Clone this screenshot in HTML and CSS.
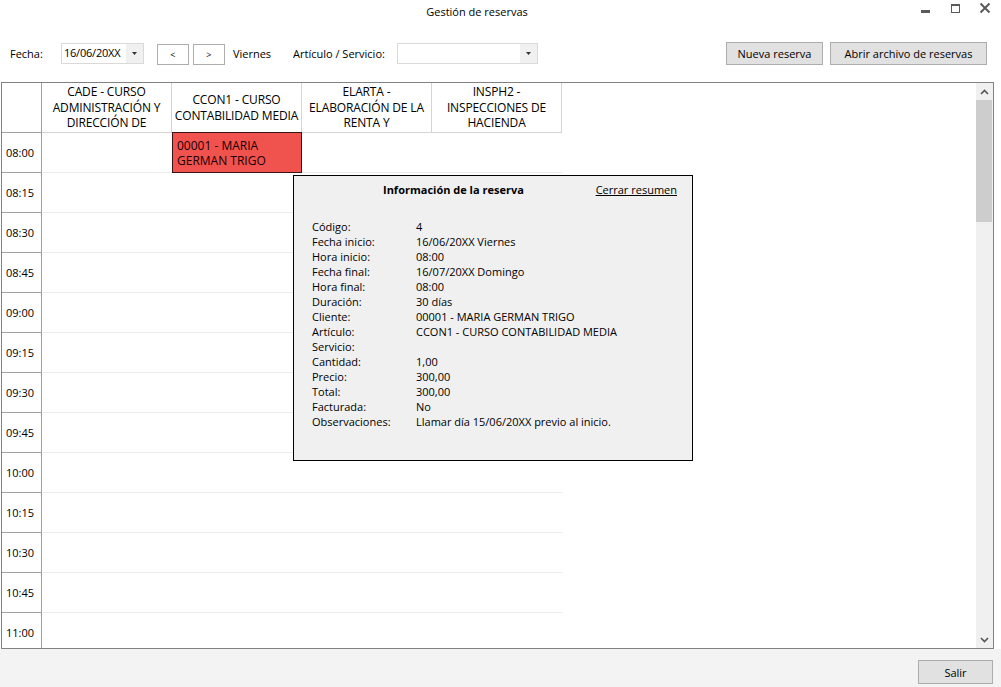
FILE: index.html
```html
<!DOCTYPE html>
<html lang="es">
<head>
<meta charset="utf-8">
<title>Gestión de reservas</title>
<link rel="stylesheet" href="styles.css">
</head>
<body>
<div class="window">
  <header class="titlebar">
    <span class="title">Gestión de reservas</span>
    <div class="controls">
      <svg class="ctl" width="30" height="20" viewBox="0 0 30 20"><rect x="10" y="10" width="9" height="3" fill="#5a5a5a"/></svg>
      <svg class="ctl" width="30" height="20" viewBox="0 0 30 20"><rect x="10.5" y="4.5" width="8" height="8" fill="none" stroke="#5a5a5a"/><rect x="10" y="4" width="9" height="2" fill="#5a5a5a"/></svg>
      <svg class="ctl" width="30" height="20" viewBox="0 0 30 20"><path d="M9.5 3.5 L18.5 12.5 M18.5 3.5 L9.5 12.5" stroke="#5a5a5a" stroke-width="2"/></svg>
    </div>
  </header>

  <div class="toolbar">
    <span class="lbl lbl-fecha">Fecha:</span>
    <div class="datebox">
      <span class="dateval">16/06/20XX</span>
      <span class="ddbtn"><svg width="5" height="3" viewBox="0 0 5 3"><path d="M0 0H5L2.5 3Z" fill="#333"/></svg></span>
    </div>
    <button class="navbtn">&lt;</button>
    <button class="navbtn">&gt;</button>
    <span class="lbl lbl-dia">Viernes</span>
    <span class="lbl lbl-art">Artículo / Servicio:</span>
    <div class="combo">
      <span class="ddbtn"><svg width="5" height="3" viewBox="0 0 5 3"><path d="M0 0H5L2.5 3Z" fill="#333"/></svg></span>
    </div>
    <div class="spacer"></div>
    <button class="btn btn-nueva">Nueva reserva</button>
    <button class="btn btn-abrir">Abrir archivo de reservas</button>
  </div>

  <div class="frame">
    <div class="sheet">
      <div class="hrow">
        <div class="tcell"></div>
        <div class="hcell">CADE - CURSO ADMINISTRACIÓN Y DIRECCIÓN DE</div>
        <div class="hcell">CCON1 - CURSO CONTABILIDAD MEDIA</div>
        <div class="hcell">ELARTA - ELABORACIÓN DE LA RENTA Y</div>
        <div class="hcell">INSPH2 - INSPECCIONES DE HACIENDA</div>
      </div>
      <div class="row">
        <div class="tcell">08:00</div>
        <div class="dcells"><div class="dcell"></div><div class="dcell booking">00001 - MARIA GERMAN TRIGO</div><div class="dcell"></div><div class="dcell"></div></div>
      </div>
      <div class="row"><div class="tcell">08:15</div><div class="dcells"></div></div>
      <div class="row"><div class="tcell">08:30</div><div class="dcells"></div></div>
      <div class="row"><div class="tcell">08:45</div><div class="dcells"></div></div>
      <div class="row"><div class="tcell">09:00</div><div class="dcells"></div></div>
      <div class="row"><div class="tcell">09:15</div><div class="dcells"></div></div>
      <div class="row"><div class="tcell">09:30</div><div class="dcells"></div></div>
      <div class="row"><div class="tcell">09:45</div><div class="dcells"></div></div>
      <div class="row"><div class="tcell">10:00</div><div class="dcells"></div></div>
      <div class="row"><div class="tcell">10:15</div><div class="dcells"></div></div>
      <div class="row"><div class="tcell">10:30</div><div class="dcells"></div></div>
      <div class="row"><div class="tcell">10:45</div><div class="dcells"></div></div>
      <div class="row"><div class="tcell">11:00</div><div class="dcells"></div></div>
    </div>
    <div class="scrollbar">
      <div class="sarrow"><svg width="9" height="6" viewBox="0 0 9 6"><path d="M1 5 L4.5 1.5 L8 5" fill="none" stroke="#555" stroke-width="1.6"/></svg></div>
      <div class="thumb"></div>
      <div class="track"></div>
      <div class="sarrow"><svg width="9" height="6" viewBox="0 0 9 6"><path d="M1 1 L4.5 4.5 L8 1" fill="none" stroke="#555" stroke-width="1.6"/></svg></div>
    </div>

    <div class="popup">
      <div class="popup-head">
        <span class="popup-title">Información de la reserva</span>
        <span class="popup-close">Cerrar resumen</span>
      </div>
      <dl class="info">
        <dt>Código:</dt><dd>4</dd>
        <dt>Fecha inicio:</dt><dd>16/06/20XX Viernes</dd>
        <dt>Hora inicio:</dt><dd>08:00</dd>
        <dt>Fecha final:</dt><dd>16/07/20XX Domingo</dd>
        <dt>Hora final:</dt><dd>08:00</dd>
        <dt>Duración:</dt><dd>30 días</dd>
        <dt>Cliente:</dt><dd>00001 - MARIA GERMAN TRIGO</dd>
        <dt>Artículo:</dt><dd>CCON1 - CURSO CONTABILIDAD MEDIA</dd>
        <dt>Servicio:</dt><dd></dd>
        <dt>Cantidad:</dt><dd>1,00</dd>
        <dt>Precio:</dt><dd>300,00</dd>
        <dt>Total:</dt><dd>300,00</dd>
        <dt>Facturada:</dt><dd>No</dd>
        <dt>Observaciones:</dt><dd>Llamar día 15/06/20XX previo al inicio.</dd>
      </dl>
    </div>
  </div>

  <footer class="footer">
    <button class="btn btn-salir">Salir</button>
  </footer>
</div>
</body>
</html>
```

FILE: styles.css
```css
* { box-sizing: border-box; }
html, body { margin: 0; padding: 0; }
body {
  width: 1001px;
  height: 687px;
  overflow: hidden;
  font-family: "Open Sans", "Noto Sans", sans-serif;
  font-size: 11px;
  color: #000;
  background: #fff;
}
.window {
  display: flex;
  flex-direction: column;
  height: 687px;
}
.titlebar {
  position: relative;
  height: 30px;
  display: flex;
  justify-content: center;
  padding: 3px 47px 0 0;
}
.title {
  font-size: 11px;
  line-height: 18px;
}
.controls {
  position: absolute;
  right: 0;
  top: 0;
  display: flex;
}
.ctl { display: block; }

.toolbar {
  height: 52px;
  display: flex;
  align-items: center;
  padding: 0 14px 5px 10px;
}
.lbl { white-space: nowrap; }
.lbl-fecha { margin-right: 18px; }
.datebox {
  width: 83px;
  height: 21px;
  border: 1px solid #d9d9d9;
  display: flex;
  align-items: center;
  justify-content: space-between;
  padding-left: 2px;
  margin-top: -1px;
}
.dateval { line-height: 16px; letter-spacing: -0.2px; }
.ddbtn {
  width: 17px;
  height: 19px;
  background: #f0f0f0;
  display: flex;
  align-items: center;
  justify-content: center;
}
.ddbtn svg { display: block; }
.navbtn {
  width: 32px;
  height: 21px;
  border: 1px solid #adadad;
  background: #fff;
  font-family: inherit;
  font-size: 9px;
  padding: 0;
  margin: 1px 0 0;
  line-height: 1;
}
.navbtn:first-of-type { margin-left: 13px; margin-right: 4px; }
.lbl-dia { margin-left: 8px; }
.lbl-art { margin-left: 22px; }
.combo {
  width: 141px;
  height: 21px;
  margin-left: 12px;
  margin-top: -1px;
  border: 1px solid #d9d9d9;
  display: flex;
  justify-content: flex-end;
}
.spacer { flex: 1; }
.btn {
  height: 23px;
  border: 1px solid #adadad;
  background: #e1e1e1;
  font-family: inherit;
  font-size: 11px;
  padding: 0 6px;
  margin: 0;
  color: #000;
}
.btn-nueva { width: 97px; margin-right: 7px; }
.btn-abrir { width: 157px; }

.frame {
  position: relative;
  margin-left: 1px;
  width: 993px;
  height: 567px;
  border: 1px solid #828282;
  display: flex;
  background: #fff;
}
.sheet {
  flex: 1;
  overflow: hidden;
}
.hrow {
  display: flex;
  height: 50px;
}
.hrow .tcell {
  height: 50px;
}
.tcell {
  width: 40px;
  flex: none;
  border-right: 1px solid #a0a0a0;
  border-bottom: 1px solid #a0a0a0;
  display: flex;
  align-items: center;
  padding-left: 4px;
  font-size: 11px;
}
.hcell {
  width: 130px;
  height: 50px;
  border-right: 1px solid #d4d4d4;
  border-bottom: 1px solid #d4d4d4;
  display: flex;
  align-items: center;
  justify-content: center;
  text-align: center;
  font-size: 12px;
  line-height: 15.5px;
  padding: 0 1px;
  letter-spacing: -0.15px;
  overflow: hidden;
}
.row {
  display: flex;
  height: 40px;
}
.row .tcell { height: 40px; }
.dcells {
  width: 520px;
  height: 40px;
  border-bottom: 1px solid #ececec;
  display: flex;
}
.dcell {
  width: 130px;
  height: 39px;
}
.booking {
  background: #f0524e;
  border: 1px solid #3a1414;
  margin: -1px 0 0 0;
  height: 41px;
  padding: 5px 4px 0 4px;
  font-size: 12px;
  line-height: 15px;
  color: #1a0000;
}

.scrollbar {
  width: 17px;
  flex: none;
  background: #f0f0f0;
  display: flex;
  flex-direction: column;
}
.sarrow {
  height: 17px;
  display: flex;
  align-items: center;
  justify-content: center;
}
.thumb {
  height: 122px;
  margin: 0 1px 0 0;
  background: #cdcdcd;
}
.track { flex: 1; }

.popup {
  position: absolute;
  left: 291px;
  top: 92px;
  width: 400px;
  height: 286px;
  background: #f0f0f0;
  border: 1px solid #000;
  padding: 6px 15px 0 18px;
}
.popup-head {
  position: relative;
  height: 16px;
  display: flex;
  line-height: 16px;
  padding-left: 71px;
}
.popup-title {
  font-weight: 700;
}
.popup-close {
  position: absolute;
  right: 0;
  top: 0;
  text-decoration: underline;
}
.info {
  display: grid;
  grid-template-columns: 104px 1fr;
  margin: 21px 0 0 0;
  line-height: 15px;
}
.info dt, .info dd { margin: 0; height: 15px; white-space: nowrap; }

.footer {
  flex: 1;
  background: #f3f3f3;
  display: flex;
  justify-content: flex-end;
  align-items: flex-start;
  padding: 11px 8px 0 0;
}
.btn-salir { width: 75px; height: 24px; }
```
